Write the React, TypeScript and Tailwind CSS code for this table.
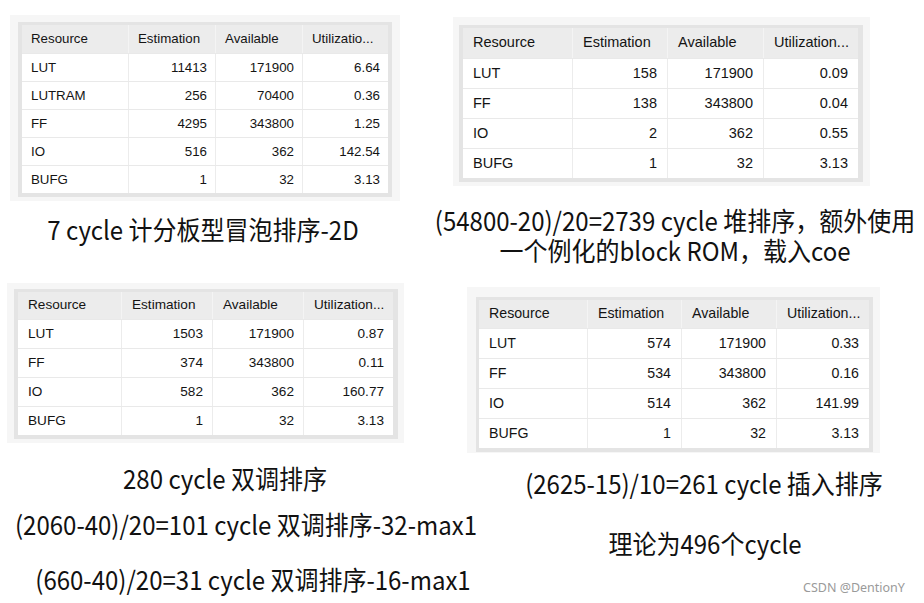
import React from "react";

type Cfg = {
  box: string;
  frame: string;
  text: string;
  head: string;
  row: string;
  cols: string[];
  padL: string;
  padR: string;
  util: string;
  rows: string[][];
};

const T1: Cfg = {
  box: "w-[390px] h-[186px] pl-[8px] pt-[7px]",
  frame: "pl-[4px] pt-[3px] pr-[4px] pb-[4px]",
  text: "text-[13.3px]",
  head: "h-[28px]",
  row: "h-[28px]",
  cols: ["w-[106px]", "w-[87px]", "w-[87px]", "w-[86px]"],
  padL: "pl-[9px]",
  padR: "pr-[8px]",
  util: "Utilizatio...",
  rows: [
    ["LUT", "11413", "171900", "6.64"],
    ["LUTRAM", "256", "70400", "0.36"],
    ["FF", "4295", "343800", "1.25"],
    ["IO", "516", "362", "142.54"],
    ["BUFG", "1", "32", "3.13"],
  ],
};

const T2: Cfg = {
  box: "w-[417px] h-[169px] pl-[6px] pt-[8px]",
  frame: "pl-[4px] pt-[3px] pr-[5px] pb-[4px]",
  text: "text-[14.5px]",
  head: "h-[30px]",
  row: "h-[30px]",
  cols: ["w-[109px]", "w-[95px]", "w-[96px]", "w-[95px]"],
  padL: "pl-[10px]",
  padR: "pr-[10px]",
  util: "Utilization...",
  rows: [
    ["LUT", "158", "171900", "0.09"],
    ["FF", "138", "343800", "0.04"],
    ["IO", "2", "362", "0.55"],
    ["BUFG", "1", "32", "3.13"],
  ],
};

const T3: Cfg = {
  box: "w-[397px] h-[160px] pl-[7px] pt-[6px]",
  frame: "pl-[4px] pt-[3px] pr-[5px] pb-[4px]",
  text: "text-[13.6px]",
  head: "h-[27px]",
  row: "h-[29px]",
  cols: ["w-[103px]", "w-[91px]", "w-[91px]", "w-[90px]"],
  padL: "pl-[10px]",
  padR: "pr-[9px]",
  util: "Utilization...",
  rows: [
    ["LUT", "1503", "171900", "0.87"],
    ["FF", "374", "343800", "0.11"],
    ["IO", "582", "362", "160.77"],
    ["BUFG", "1", "32", "3.13"],
  ],
};

const T4: Cfg = {
  box: "w-[413px] h-[166px] pl-[9px] pt-[10px]",
  frame: "pl-[3px] pt-[3px] pr-[4px] pb-[4px]",
  text: "text-[14.2px]",
  head: "h-[28px]",
  row: "h-[30px]",
  cols: ["w-[108px]", "w-[94px]", "w-[95px]", "w-[93px]"],
  padL: "pl-[10px]",
  padR: "pr-[10px]",
  util: "Utilization...",
  rows: [
    ["LUT", "574", "171900", "0.33"],
    ["FF", "534", "343800", "0.16"],
    ["IO", "514", "362", "141.99"],
    ["BUFG", "1", "32", "3.13"],
  ],
};

function Tbl({ c }: { c: Cfg }) {
  const head = ["Resource", "Estimation", "Available", c.util];
  return (
    <div className={`bg-[#f6f6f6] ${c.box}`}>
      <div className={`inline-block bg-[#e4e4e4] ${c.frame}`}>
        <div className={`font-['Liberation_Sans',Arial,sans-serif] text-[#141414] ${c.text}`}>
          <div className={`flex bg-[#ececec] ${c.head}`}>
            {head.map((h, i) => (
              <div
                key={i}
                className={`flex items-center whitespace-nowrap overflow-hidden ${c.cols[i]} ${c.padL} ${
                  i > 0 ? "border-l border-[#f4f4f4]" : ""
                }`}
              >
                {h}
              </div>
            ))}
          </div>
          {c.rows.map((r, ri) => (
            <div key={ri} className={`flex bg-white border-t border-[#e9e9e9] ${c.row}`}>
              {r.map((v, ci) => (
                <div
                  key={ci}
                  className={`flex items-center whitespace-nowrap ${c.cols[ci]} ${
                    ci === 0 ? c.padL : `justify-end border-l border-[#ececec] ${c.padR}`
                  }`}
                >
                  {v}
                </div>
              ))}
            </div>
          ))}
        </div>
      </div>
    </div>
  );
}

const FONT = "font-['Noto_Sans_CJK_SC','Noto_Sans',sans-serif] text-[#111] text-[24px] whitespace-nowrap text-center scale-y-[1.08]";
const CAP = `${FONT} leading-[30px]`;

export default function App() {
  return (
    <div className="relative w-[924px] h-[603px] bg-white overflow-hidden flex">
      {/* Left column */}
      <div className="w-[410px] shrink-0 flex flex-col">
        <div className="mt-[15px] ml-[10px]">
          <Tbl c={T1} />
        </div>
        <div className={`${CAP} mt-[13px] w-[406px]`}>7 cycle 计分板型冒泡排序-2D</div>
        <div className="mt-[39px] ml-[7px]">
          <Tbl c={T3} />
        </div>
        <div className={`${CAP} mt-[20px] w-[450px]`}>280 cycle 双调排序</div>
        <div className={`${CAP} mt-[16px] w-[492px]`}>(2060-40)/20=101 cycle 双调排序-32-max1</div>
        <div className={`${CAP} mt-[25px] w-[506px]`}>(660-40)/20=31 cycle 双调排序-16-max1</div>
      </div>

      {/* Right column */}
      <div className="w-[514px] shrink-0 flex flex-col">
        <div className="mt-[17px] ml-[43px]">
          <Tbl c={T2} />
        </div>
        <div className="mt-[20px] w-[530px] flex flex-col gap-[3px]">
          <div className={`${FONT} leading-[27px]`}>(54800-20)/20=2739 cycle 堆排序，额外使用</div>
          <div className={`${FONT} leading-[27px]`}>一个例化的block ROM，载入coe</div>
        </div>
        <div className="mt-[24px] ml-[57px]">
          <Tbl c={T4} />
        </div>
        <div className={`${CAP} mt-[15px] w-[588px]`}>(2625-15)/10=261 cycle 插入排序</div>
        <div className={`${CAP} mt-[30px] w-[590px]`}>理论为496个cycle</div>
      </div>

      <div className="absolute left-[803px] top-[580px] text-[12.5px] leading-[16px] text-[#9a9a9a] whitespace-nowrap font-['Noto_Sans',sans-serif]">
        CSDN @DentionY
      </div>
    </div>
  );
}
